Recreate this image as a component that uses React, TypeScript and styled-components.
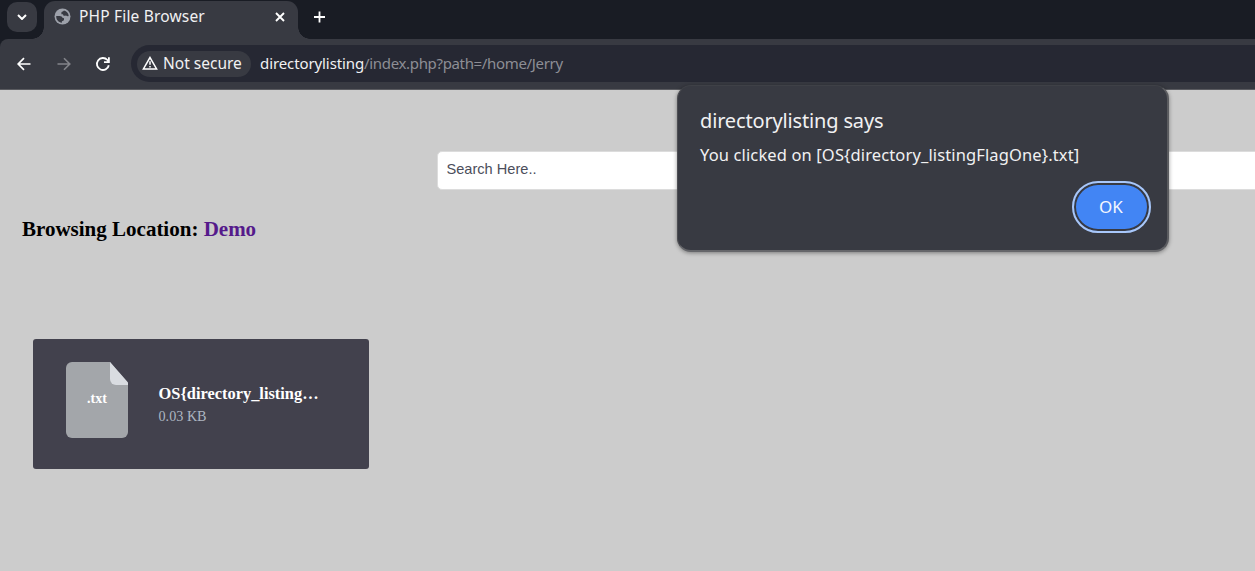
import React from 'react';
import styled, { createGlobalStyle } from 'styled-components';

const GlobalStyle = createGlobalStyle`
  *, *::before, *::after { box-sizing: border-box; }
  body { margin: 0; background: #cccccc; overflow: hidden; }
`;

const Browser = styled.div`
  position: relative;
  width: 1255px;
  height: 571px;
  overflow: hidden;
  display: flex;
  flex-direction: column;
  background: #191c24;
  font-family: "Noto Sans", "Open Sans", sans-serif;
  color: #f1f1f2;
`;

const Label = styled.span<{ $size: number; $spacing?: number; $color?: string }>`
  font-size: ${(p) => p.$size}px;
  letter-spacing: ${(p) => p.$spacing ?? 0}px;
  color: ${(p) => p.$color ?? 'inherit'};
  line-height: 24px;
  white-space: pre;
`;

const TabStrip = styled.div`
  display: flex;
  height: 39px;
  flex: none;
`;

const TabSearch = styled.div`
  width: 30px;
  height: 30px;
  margin: 2px 7px 0;
  border-radius: 10px;
  background: #383a42;
  display: flex;
  align-items: center;
  justify-content: center;
`;

const Tab = styled.div`
  position: relative;
  width: 254px;
  height: 38px;
  margin-top: 1px;
  padding: 0 12px 7px 10px;
  border-radius: 11px 11px 0 0;
  background: #383a42;
  display: flex;
  align-items: center;

  &::before, &::after {
    content: "";
    position: absolute;
    bottom: 0;
    width: 12px;
    height: 12px;
  }
  &::before {
    left: -12px;
    background: radial-gradient(circle at 0 0, transparent 11.5px, #383a42 12px);
  }
  &::after {
    right: -12px;
    background: radial-gradient(circle at 100% 0, transparent 11.5px, #383a42 12px);
  }
`;

const TabTitle = styled.div`
  flex: 1;
  margin-left: 8px;
  padding-bottom: 2px;
  display: flex;
`;

const NewTab = styled.div`
  margin: 9px 0 0 15px;
  height: 16px;
  display: flex;
`;

const Toolbar = styled.div`
  height: 51px;
  flex: none;
  padding: 6px 0 0 16px;
  border-bottom: 1px solid #5a5b60;
  border-radius: 8px 0 0 0;
  background: #383a42;
  display: flex;
`;

const NavButtons = styled.div`
  width: 115px;
  height: 37px;
  display: flex;
  align-items: center;
  gap: 23.5px;
`;

const Omnibox = styled.div`
  flex: 1;
  height: 37px;
  padding-left: 6px;
  border-radius: 19px 0 0 19px;
  background: #262833;
  display: flex;
  align-items: center;
`;

const SecurityChip = styled.div`
  width: 114px;
  height: 26px;
  margin-right: 9px;
  padding: 0 0 1px 5px;
  border-radius: 13px;
  background: #383a42;
  display: flex;
  align-items: center;
  gap: 5px;
`;

const Address = styled.div`
  padding-bottom: 2px;
  display: flex;
`;

const Page = styled.main`
  flex: 1;
  background: #cccccc;
  color: #000;
  font-family: "Liberation Serif", serif;
`;

const SearchInput = styled.input`
  display: block;
  width: 900px;
  height: 39px;
  margin: 61px 0 0 437px;
  padding: 0 8.5px 3px;
  border: 1px solid #dcdcdc;
  border-radius: 5px;
  background: #fff;
  font: 14.6px "Liberation Sans", sans-serif;
  &::placeholder { color: #4b4e5b; opacity: 1; }
`;

const Location = styled.h1`
  margin: 25px 0 0 22px;
  font-size: 21px;
  line-height: 28px;
  font-weight: bold;
  a { color: #551a8b; text-decoration: none; }
`;

const FileCard = styled.div`
  width: 336px;
  height: 130px;
  margin: 96px 0 0 33px;
  padding: 23px 33px;
  border-radius: 3px;
  background: #42414d;
  display: flex;
`;

const FileIcon = styled.svg`
  width: 62px;
  height: 76px;
  margin-right: 30.5px;
  flex: none;
`;

const FileDetails = styled.div`
  padding-top: 21px;
`;

const FileName = styled.div`
  font-size: 16.4px;
  line-height: 22px;
  font-weight: bold;
  color: #fff;
  white-space: nowrap;
`;

const FileSize = styled.div`
  font-size: 14.2px;
  line-height: 22px;
  color: #aeb7c2;
`;

const Dialog = styled.div`
  position: absolute;
  left: 677px;
  top: 85px;
  width: 492px;
  height: 167px;
  padding: 23px 16px 0 22px;
  border: 1px solid #4d4e53;
  border-top-color: #3f4147;
  border-bottom: 2px solid #65666a;
  border-right: 2px solid #5b5c60;
  border-radius: 14px;
  background: #383a42;
  box-shadow: 0 1px 4px rgba(0, 0, 0, 0.4);
  display: flex;
  flex-direction: column;
`;

const DialogMessage = styled.div`
  margin-top: 10px;
  display: flex;
`;

const OkButton = styled.button`
  align-self: flex-end;
  width: 79px;
  height: 52px;
  margin-top: 14px;
  padding: 0 1px 0 0;
  border: 2px solid #a8c7fa;
  border-radius: 26px;
  background: #4285f4;
  background-clip: padding-box;
  box-shadow: inset 0 0 0 2px #383a42;
  color: #f4f7fe;
  font-family: inherit;
  display: flex;
  align-items: center;
  justify-content: center;
`;

const Globe = () => (
  <svg width="17" height="17" viewBox="0 0 17 17">
    <circle cx="8.5" cy="8.5" r="8" fill="#9da1aa" />
    <path
      d="M2.200 8h3.500q2.400.2 2.800 1.700l1.500.5v1.500q-.2 1.200-2.100 1.500v1.500C4.500 14.300 2 11.800 2.200 8ZM10 2.400C12.700 3 14.600 5.300 14.700 7.800q-.7.900-1.600.3-.8-.7-1.800-.4H9.600L8.900 6.300H7.400V4.500q.2-.9 1.500-.9Z"
      fill="#383a42"
    />
  </svg>
);

export default function App() {
  return (
    <Browser>
      <GlobalStyle />
      <TabStrip>
        <TabSearch>
          <svg width="10" height="6" viewBox="0 0 10 6" fill="none" stroke="#fff" strokeWidth="2">
            <path d="M1 1l4 4 4-4" />
          </svg>
        </TabSearch>
        <Tab>
          <Globe />
          <TabTitle>
            <Label $size={15.5} $spacing={0.18}>PHP File Browser</Label>
          </TabTitle>
          <svg width="12" height="12" viewBox="0 0 12 12" stroke="#fff" strokeWidth="1.9">
            <path d="M2 2l8 8M10 2l-8 8" />
          </svg>
        </Tab>
        <NewTab>
          <svg width="13" height="16" viewBox="0 0 13 16" stroke="#fff" strokeWidth="1.800">
            <path d="M6.500 2.500v11M1 8h11" />
          </svg>
        </NewTab>
      </TabStrip>
      <Toolbar>
        <NavButtons>
          <svg width="16" height="16" viewBox="0 0 16 16" fill="none" stroke="#fff" strokeWidth="1.7">
            <path d="M14.500 8H2.500M8 2.200L2.200 8 8 13.800" />
          </svg>
          <svg width="16" height="16" viewBox="0 0 16 16" fill="none" stroke="#83848a" strokeWidth="1.600">
            <path d="M1.500 8h12M8 2.200L13.800 8 8 13.800" />
          </svg>
          <svg width="16" height="16" viewBox="0 0 16 16" fill="none" stroke="#fff" strokeWidth="1.800">
            <path d="M13.800 9.200a6 6 0 1 1-1.400-5.200L13.900 5.900M13.900 1.200v4.900H9" />
          </svg>
        </NavButtons>
        <Omnibox>
          <SecurityChip>
            <svg width="16" height="14" viewBox="0 0 16 14" fill="none" stroke="#fff" strokeWidth="1.500">
              <path d="M8 1.500L1.400 12.900h13.200Z" />
              <path d="M8 5.300v3.500M8 9.900v1.600" />
            </svg>
            <Label $size={15.5}>Not secure</Label>
          </SecurityChip>
          <Address>
            <Label $size={15} $spacing={-0.1}>directorylisting</Label>
            <Label $size={15} $spacing={-0.34} $color="#8d8e95">/index.php?path=/home/Jerry</Label>
          </Address>
        </Omnibox>
      </Toolbar>
      <Page>
        <SearchInput placeholder="Search Here.." />
        <Location>
          Browsing Location: <a>Demo</a>
        </Location>
        <FileCard>
          <FileIcon viewBox="0 0 62 76">
            <path d="M6 0h38l18 21v49a6 6 0 0 1-6 6H6a6 6 0 0 1-6-6V6a6 6 0 0 1 6-6Z" fill="#a3a6aa" />
            <path d="M44 0l18 20.500V23H50a6 6 0 0 1-6-6Z" fill="#d9dce1" />
            <text x="31" y="41" textAnchor="middle" fill="#fff" fontSize="14" fontWeight="bold">.txt</text>
          </FileIcon>
          <FileDetails>
            <FileName>OS{'{'}directory_listing…</FileName>
            <FileSize>0.03 KB</FileSize>
          </FileDetails>
        </FileCard>
      </Page>
      <Dialog>
        <Label $size={20} $spacing={-0.16}>directorylisting says</Label>
        <DialogMessage>
          <Label $size={16.5} $spacing={0.13}>{'You clicked on [OS{directory_listingFlagOne}.txt]'}</Label>
        </DialogMessage>
        <OkButton>
          <Label $size={17}>OK</Label>
        </OkButton>
      </Dialog>
    </Browser>
  );
}
